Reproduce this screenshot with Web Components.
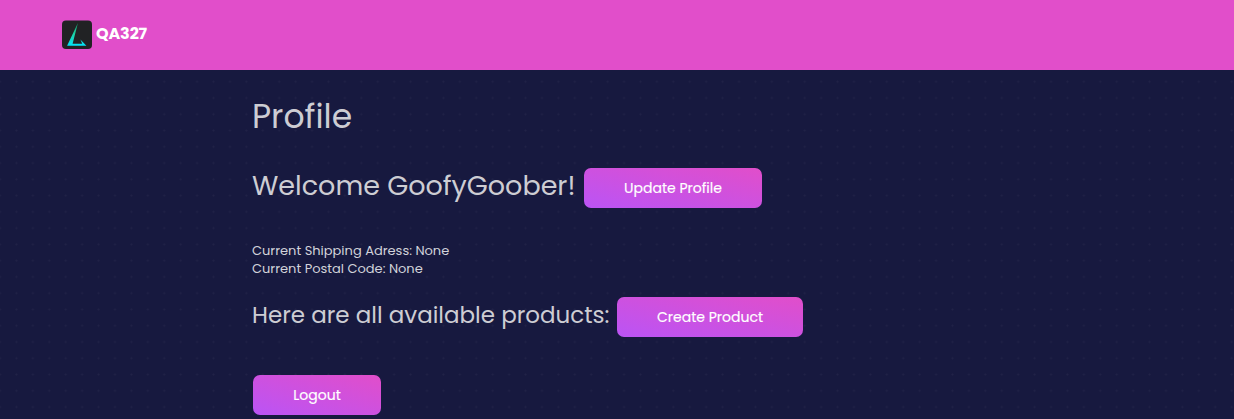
<!DOCTYPE html>
<html lang="en"><head><meta charset="utf-8"><title>Profile</title>
<style>body{margin:0;background:#17193f;font-family:Poppins,Inter,sans-serif}</style></head><body>
<profile-page></profile-page>
<script>
const define=(name,html)=>customElements.define(name,class extends HTMLElement{
 constructor(){super();this.attachShadow({mode:'open'}).innerHTML=html}
});
define('brand-logo',`<style>:host{display:block;width:30px;height:29px}svg{display:block}</style>
<svg width="30" height="29" viewBox="0 0 30 29"><defs><linearGradient id="g" x1="0" y1="0" x2="0" y2="1"><stop stop-color="#16a56c"/><stop offset=".5" stop-color="#1cd3a8"/><stop offset="1" stop-color="#04e3fa"/></linearGradient></defs>
<rect y=".4" width="30" height="28.6" rx="4" fill="#212224"/><path fill="url(#g)" d="M15.9 3 5.1 25.8H24.4L18.4 19.6 20.2 23.7H10.6Z"/></svg>`);
define('site-header',`<style>:host{display:flex;box-sizing:border-box;height:70px;padding:20px 0 0 62px;gap:4px;background:#e14eca;color:#fff}
span{font-weight:700;font-size:16px;line-height:27px;letter-spacing:-.15px;white-space:nowrap}</style><brand-logo></brand-logo><span><slot></slot></span>`);
define('action-button',`<style>:host{display:block;flex:none}button{display:block;width:100%;height:40px;border:0;padding:0;border-radius:7px;background:linear-gradient(to bottom left,#e14eca,#ba54f5);color:#fff;font:400 14px/40px Poppins,Inter,sans-serif;-webkit-text-stroke:.15px #fff;white-space:nowrap}</style><button><slot></slot></button>`);
define('fit-text',`<style>:host{display:block;white-space:nowrap;color:#cdcdd3}</style><slot></slot>`);
define('profile-page',`<style>
:host{display:block;height:419px;overflow:hidden}
main{box-sizing:border-box;height:349px;padding:22px 0 0 252px;background:radial-gradient(circle at center,#212247 0,#202146 .7px,transparent 1.4px) -8.2px 3.6px/16.43px 16.27px}
.title{font-size:33px;line-height:50px}
.row{display:flex;height:40px;align-items:center}
.welcome{margin-top:26px}.welcome fit-text{width:332px;font-size:27px;line-height:36px;position:relative;top:-2px}
.info{margin-top:34px;font-size:13px;line-height:18px}.info fit-text{color:#d2d3da}
.products{margin-top:19px}.products fit-text{width:365px;font-size:23px;line-height:36px;position:relative;top:-2px}
.logout{margin:38px 0 0 1px;width:128px}
</style><site-header>QA327</site-header><main>
<fit-text class="title">Profile</fit-text>
<div class="row welcome"><fit-text>Welcome GoofyGoober!</fit-text><action-button style="width:178px">Update Profile</action-button></div>
<div class="info"><fit-text>Current Shipping Adress: None</fit-text><fit-text>Current Postal Code: None</fit-text></div>
<div class="row products"><fit-text>Here are all available products:</fit-text><action-button style="width:186px">Create Product</action-button></div>
<action-button class="logout">Logout</action-button></main>`);
</script></body></html>
